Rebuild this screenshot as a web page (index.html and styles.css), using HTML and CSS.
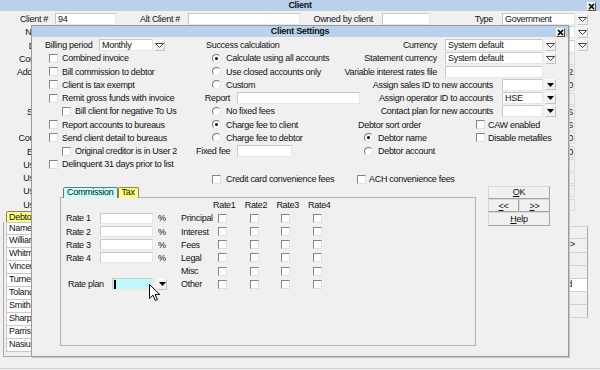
FILE: index.html
```html
<!DOCTYPE html>
<html lang="en">
<head>
    <meta charset="UTF-8">
    <meta name="viewport" content="width=device-width, initial-scale=1.0">
    <title>Client Settings</title>
    <link rel="stylesheet" href="styles.css">
</head>
<body>
<div class="desktop">

    <!-- background window: Client -->
    <div class="window client">
        <div class="caption">Client
            <span class="close"><svg width="7" height="7" viewBox="0 0 7 7"><path d="M1 1l5 5M6 1L1 6" stroke="#000" stroke-width="1.6"/></svg></span>
        </div>
        <div class="client-body">
            <div class="row top-row">
                <span class="lbl l-client">Client #</span><input class="field f-client" value="94">
                <span class="lbl l-alt">Alt Client #</span><input class="field f-alt">
                <span class="lbl l-owned">Owned by client</span><input class="field f-owned">
                <span class="lbl l-type">Type</span>
                <div class="combo c-type">
                    <span class="field val">Government</span>
                    <span class="drop"><svg width="9" height="5" viewBox="0 0 9 5"><path d="M.5.5h8l-4 4z" fill="#fff" stroke="#444"/></svg></span>
                </div>
            </div>
            <div class="row frow"><span class="flabel">Name</span><span class="field wide"></span><span class="drop"><svg width="9" height="5" viewBox="0 0 9 5"><path d="M.5.5h8l-4 4z" fill="#fff" stroke="#444"/></svg></span></div>
            <div class="row frow"><span class="flabel">Desk</span><span class="field wide"></span><span class="drop"><svg width="9" height="5" viewBox="0 0 9 5"><path d="M.5.5h8l-4 4z" fill="#fff" stroke="#444"/></svg></span></div>
            <div class="row frow"><span class="flabel">Contact</span><span class="field wide flat"></span></div>
            <div class="row frow"><span class="flabel">Address</span><span class="field wide flat">2</span></div>
            <div class="row frow"><span class="flabel"></span><span class="field wide flat">0</span></div>
            <div class="row frow"><span class="flabel"></span><span class="field wide flat"></span></div>
            <div class="row frow"><span class="flabel">Sales</span><span class="field wide flat">S</span></div>
            <div class="row frow"><span class="flabel"></span><span class="field wide flat">S</span></div>
            <div class="row frow"><span class="flabel">Country</span><span class="field wide flat">0</span></div>
            <div class="row frow"><span class="flabel">Email</span><span class="field wide flat">0</span></div>
            <div class="row frow"><span class="flabel">User 1</span><span class="field wide flat"></span></div>
            <div class="row frow"><span class="flabel">User 2</span><span class="field wide flat"></span></div>
            <div class="row frow"><span class="flabel">User 3</span><span class="field wide flat"></span></div>
            <div class="row frow"><span class="flabel">User 4</span><span class="field wide flat"></span></div>

            <div class="lists">
                <div class="list-wrap">
                    <span class="debt-tab">Debtors</span>
                    <div class="list-frame">
                        <div class="list-row">Name</div>
                        <div class="list-row">Williams, John</div>
                        <div class="list-row">Whitmore, Anne</div>
                        <div class="list-row">Vincent, Paul</div>
                        <div class="list-row">Turner, Mark</div>
                        <div class="list-row">Toland, Sue</div>
                        <div class="list-row">Smith, Robert</div>
                        <div class="list-row">Sharpe, Lisa</div>
                        <div class="list-row">Parris, Tom</div>
                        <div class="list-row">Nasiuk, Greg</div>
                    </div>
                </div>
                <div class="side-btns">
                    <div class="side-btn"></div>
                    <div class="side-btn">&gt;&gt;</div>
                    <div class="side-btn"></div>
                    <div class="side-btn"></div>
                    <div class="side-btn lit">Add</div>
                    <div class="side-btn"></div>
                    <div class="side-btn"></div>
                </div>
            </div>
        </div>
    </div>

    <!-- dialog: Client Settings -->
    <div class="window settings">
        <div class="caption">Client Settings
            <span class="close"><svg width="7" height="7" viewBox="0 0 7 7"><path d="M1 1l5 5M6 1L1 6" stroke="#000" stroke-width="1.6"/></svg></span>
        </div>
        <div class="settings-body">
            <div class="cols">
                <div class="col">
                    <div class="r">
                        <span class="lbl l-billing">Billing period</span>
                        <div class="combo c-month">
                            <span class="field val">Monthly</span>
                            <span class="drop"><svg width="9" height="5" viewBox="0 0 9 5"><path d="M.5.5h8l-4 4z" fill="#fff" stroke="#444"/></svg></span>
                        </div>
                    </div>
                    <div class="r chk"><span class="box"></span>Combined invoice</div>
                    <div class="r chk"><span class="box"></span>Bill commission to debtor</div>
                    <div class="r chk"><span class="box"></span>Client is tax exempt</div>
                    <div class="r chk"><span class="box"></span>Remit gross funds with invoice</div>
                    <div class="r chk sub"><span class="box"></span>Bill client for negative To Us</div>
                    <div class="r chk"><span class="box"></span>Report accounts to bureaus</div>
                    <div class="r chk"><span class="box"></span>Send client detail to bureaus</div>
                    <div class="r chk sub"><span class="box"></span>Original creditor is in User 2</div>
                    <div class="r chk"><span class="box"></span>Delinquent 31 days prior to list</div>
                </div>

                <div class="col">
                    <div class="r heading">Success calculation</div>
                    <div class="r rad"><span class="dot on"></span>Calculate using all accounts</div>
                    <div class="r rad"><span class="dot"></span>Use closed accounts only</div>
                    <div class="r rad"><span class="dot"></span>Custom</div>
                    <div class="r"><span class="lbl l-short">Report</span><input class="field f-report"></div>
                    <div class="r rad"><span class="dot"></span>No fixed fees</div>
                    <div class="r rad"><span class="dot on"></span>Charge fee to client</div>
                    <div class="r rad"><span class="dot"></span>Charge fee to debtor</div>
                    <div class="r"><span class="lbl l-short">Fixed fee</span><input class="field f-fee"></div>
                    <div class="r"></div>
                    <div class="r chk extra"><span class="box"></span>Credit card convenience fees</div>
                </div>

                <div class="col">
                    <div class="r right">
                        <span class="lbl">Currency</span>
                        <div class="combo c-wide">
                            <span class="field val">System default</span>
                            <span class="drop"><svg width="9" height="5" viewBox="0 0 9 5"><path d="M.5.5h8l-4 4z" fill="#fff" stroke="#444"/></svg></span>
                        </div>
                    </div>
                    <div class="r right">
                        <span class="lbl">Statement currency</span>
                        <div class="combo c-wide">
                            <span class="field val">System default</span>
                            <span class="drop"><svg width="9" height="5" viewBox="0 0 9 5"><path d="M.5.5h8l-4 4z" fill="#fff" stroke="#444"/></svg></span>
                        </div>
                    </div>
                    <div class="r right">
                        <span class="lbl">Variable interest rates file</span>
                        <input class="field f-rates">
                    </div>
                    <div class="r right">
                        <span class="lbl">Assign sales ID to new accounts</span>
                        <div class="combo c-small">
                            <span class="field val"></span>
                            <span class="drop"><svg width="7" height="4" viewBox="0 0 7 4"><path d="M0 0h7L3.5 4z"/></svg></span>
                        </div>
                    </div>
                    <div class="r right">
                        <span class="lbl">Assign operator ID to accounts</span>
                        <div class="combo c-small">
                            <span class="field val">HSE</span>
                            <span class="drop"><svg width="7" height="4" viewBox="0 0 7 4"><path d="M0 0h7L3.5 4z"/></svg></span>
                        </div>
                    </div>
                    <div class="r right">
                        <span class="lbl">Contact plan for new accounts</span>
                        <div class="combo c-small">
                            <span class="field val"></span>
                            <span class="drop"><svg width="7" height="4" viewBox="0 0 7 4"><path d="M0 0h7L3.5 4z"/></svg></span>
                        </div>
                    </div>
                    <div class="r split">
                        <span class="sort-title">Debtor sort order</span>
                        <span class="chk flush"><span class="box"></span>CAW enabled</span>
                    </div>
                    <div class="r split">
                        <span class="rad sort"><span class="dot on"></span>Debtor name</span>
                        <span class="chk flush"><span class="box"></span>Disable metafiles</span>
                    </div>
                    <div class="r split">
                        <span class="rad sort"><span class="dot"></span>Debtor account</span>
                    </div>
                    <div class="r"></div>
                    <div class="r chk flush extra"><span class="box"></span>ACH convenience fees</div>
                </div>
            </div>

            <div class="lower">
                <div class="tabbox">
                    <div class="tabs">
                        <span class="tab cyan">Commission</span>
                        <span class="tab yellow">Tax</span>
                    </div>
                    <div class="panel">
                        <div class="rates">
                            <span class="hdr c5">Rate1</span>
                            <span class="hdr c6">Rate2</span>
                            <span class="hdr c7">Rate3</span>
                            <span class="hdr c8">Rate4</span>

                            <span class="c1">Rate 1</span><input class="field rate-in"><span class="pct">%</span>
                            <span class="c4">Principal</span><span class="box"></span><span class="box"></span><span class="box"></span><span class="box"></span>

                            <span class="c1">Rate 2</span><input class="field rate-in"><span class="pct">%</span>
                            <span class="c4">Interest</span><span class="box"></span><span class="box"></span><span class="box"></span><span class="box"></span>

                            <span class="c1">Rate 3</span><input class="field rate-in"><span class="pct">%</span>
                            <span class="c4">Fees</span><span class="box"></span><span class="box"></span><span class="box"></span><span class="box"></span>

                            <span class="c1">Rate 4</span><input class="field rate-in"><span class="pct">%</span>
                            <span class="c4">Legal</span><span class="box"></span><span class="box"></span><span class="box"></span><span class="box"></span>

                            <span class="c4">Misc</span><span class="box"></span><span class="box"></span><span class="box"></span><span class="box"></span>

                            <div class="plan">
                                <span class="plan-lbl">Rate plan</span>
                                <div class="combo c-plan">
                                    <span class="field val"><span class="caret"></span></span>
                                    <span class="drop"><svg width="7" height="4" viewBox="0 0 7 4"><path d="M0 0h7L3.5 4z"/></svg></span>
                                </div>
                            </div>
                            <span class="c4">Other</span><span class="box"></span><span class="box"></span><span class="box"></span><span class="box"></span>
                        </div>
                    </div>
                </div>
                <div class="btns">
                    <button class="btn"><u>O</u>K</button>
                    <div class="btn-pair">
                        <button class="btn"><u>&lt;</u>&lt;</button>
                        <button class="btn"><u>&gt;</u>&gt;</button>
                    </div>
                    <button class="btn"><u>H</u>elp</button>
                </div>
            </div>
        </div>
    </div>

    <svg class="pointer" width="11" height="17" viewBox="0 0 11 17"><path d="M.5.5v14l3.5-3.3 2.3 5.3 2.1-.9-2.3-5.2h4.6z" fill="#fff" stroke="#000"/></svg>
</div>
</body>
</html>
```

FILE: styles.css
```css
* {
    box-sizing: border-box;
}
body {
    margin: 0;
    background: #f0f0f0;
    font: 9px "Liberation Sans", Arial, sans-serif;
    letter-spacing: -0.3px;
    color: #111;
}
.desktop {
    position: relative;
    width: 600px;
    height: 370px;
    overflow: hidden;
}
.window {
    background: #f0f0f0;
}
.caption {
    position: relative;
    height: 11px;
    line-height: 11px;
    background: #b9d1ea;
    font-weight: bold;
    text-align: center;
}
.close {
    position: absolute;
    top: 2px;
    right: 4px;
    width: 9px;
    height: 9px;
    display: flex;
    align-items: center;
    justify-content: center;
    background: #e6e6e6;
    border: 1px solid;
    border-color: #fff #505050 #505050 #fff;
}

/* shared controls */
.row, .r {
    height: 13.25px;
    display: flex;
    align-items: center;
    white-space: nowrap;
}
.lbl {
    text-align: right;
    flex: none;
}
.field {
    height: 12px;
    padding: 0 2px;
    font: inherit;
    letter-spacing: inherit;
    line-height: 10px;
    color: #111;
    background: #fff;
    border: 1px solid;
    border-color: #c8c8c8 #e6e6e6 #e6e6e6 #c8c8c8;
    outline: none;
    overflow: hidden;
}
.combo {
    display: flex;
    align-items: center;
    flex: none;
}
.drop {
    width: 11px;
    height: 11px;
    margin-left: 2px;
    display: flex;
    align-items: center;
    justify-content: center;
    background: #f0f0f0;
    border: 1px solid;
    border-color: #fff #c4c4c4 #c4c4c4 #fff;
}
.box {
    width: 9px;
    height: 9px;
    flex: none;
    background: #fff;
    border: 1px solid;
    border-color: #858585 #e0e0e0 #e0e0e0 #858585;
}
.dot {
    position: relative;
    width: 9px;
    height: 9px;
    flex: none;
    border-radius: 50%;
    background: #fff;
    border: 1px solid;
    border-color: #777 #e4e4e4 #e4e4e4 #777;
}
.dot.on::after {
    content: "";
    position: absolute;
    left: 2px;
    top: 2px;
    width: 3px;
    height: 3px;
    border-radius: 50%;
    background: #000;
}
.chk {
    display: flex;
    align-items: center;
    gap: 4px;
    padding-left: 4px;
}
.chk.sub {
    padding-left: 17px;
}
.chk.flush {
    padding-left: 0;
    gap: 3px;
}
.rad {
    display: flex;
    align-items: center;
    gap: 5px;
    padding-left: 16px;
}

/* Client window */
.client {
    height: 369px;
    border-bottom: 1px solid #d2d2d2;
}
.client-body {
    padding-top: 1.4px;
}
.l-client { width: 48px; }
.f-client { width: 61px; margin-left: 7px; }
.l-alt { width: 64px; }
.f-alt { width: 112px; margin-left: 8px; }
.l-owned { width: 73px; }
.f-owned { width: 48px; margin-left: 9px; }
.l-type { width: 63px; }
.c-type { margin-left: 9px; }
.c-type .val { width: 73px; }

.flabel {
    width: 48px;
    text-align: right;
    flex: none;
}
.field.wide {
    width: 520px;
    margin-left: 7px;
    text-align: right;
    padding-right: 1px;
}
.field.flat {
    background: #f0f0f0;
    border-color: #dcdcdc;
}
.lists {
    display: flex;
}
.list-wrap {
    margin-left: 3px;
    width: 510px;
}
.debt-tab {
    display: inline-block;
    height: 11px;
    margin-left: 3px;
    padding: 0 2px;
    line-height: 10px;
    background: #ffff80;
    border: 1px solid #808080;
    border-bottom: none;
    border-radius: 2px 2px 0 0;
}
.list-frame {
    height: 135px;
    padding-left: 2px;
    border-left: 1px solid #a8a8a8;
    border-bottom: 1px solid #a8a8a8;
}
.list-row {
    width: 80px;
    height: 13px;
    padding-left: 2px;
    line-height: 11px;
    background: #fff;
    border: 1px solid #c8c8c8;
    border-top: none;
}
.list-row:first-child {
    border-top: 1px solid #c8c8c8;
}
.side-btns {
    width: 68px;
    margin: 15px 0 0 7px;
}
.side-btn {
    height: 13.2px;
    padding-right: 12px;
    line-height: 11px;
    text-align: right;
    border: 1px solid #d0d0d0;
    border-right-color: #a8a8a8;
    border-top: none;
}
.side-btn:first-child {
    border-top: 1px solid #d0d0d0;
}
.side-btn.lit {
    background: #fff;
    padding-right: 15px;
}

/* Client Settings dialog */
.settings {
    position: absolute;
    left: 31px;
    top: 25px;
    width: 538px;
    height: 332px;
    border: 1px solid #9a9a9a;
    box-shadow: 1px 1px 0 #c4c4c4;
}
.settings .close {
    right: 3px;
}
.settings-body {
    padding: 1.4px 12px 0 13px;
}
.cols {
    display: grid;
    grid-template-columns: 151px 161px 199px;
}
.l-billing { width: 54px; text-align: left; }
.c-month .val { width: 54px; }
.c-month .drop { margin-left: 1px; }
.heading { padding-left: 10px; }
.l-short { width: 34px; }
.f-report { width: 124px; margin-left: 7px; }
.f-fee { width: 55px; margin-left: 7px; }
.extra { margin-top: 1.5px; }
.col .extra.chk:not(.flush) {
    padding-left: 16px;
    gap: 5px;
}
.r.right {
    justify-content: flex-end;
}
.c-wide { margin-left: 8px; }
.c-wide .val { width: 98px; }
.f-rates { width: 98px; margin: 0 13px 0 8px; }
.c-small { margin-left: 9px; }
.c-small .val { width: 41px; }
.r.split {
    display: grid;
    grid-template-columns: 119px 1fr;
}
.sort-title { padding-left: 1px; }
.rad.sort { padding-left: 7px; }

.lower {
    display: flex;
}
.tabbox {
    width: 416px;
    margin: 1px 0 0 15px;
}
.tabs {
    display: flex;
    height: 10px;
    padding-left: 3px;
}
.tab {
    height: 11px;
    padding: 0 3px;
    line-height: 9px;
    border: 1px solid #6a7a7a;
    border-bottom: none;
    border-radius: 2px 2px 0 0;
    position: relative;
}
.tab.cyan { background: #c8ffff; }
.tab.yellow { background: #ffff80; border-color: #8a8a50; }
.panel {
    height: 149px;
    padding: 1px 0 0 5px;
    border: 1px solid #b4b4b4;
}
.rates {
    display: grid;
    grid-template-columns: 34px 53px 28px 37px repeat(4, 31.7px);
    grid-auto-rows: 13.2px;
    align-items: center;
    white-space: nowrap;
}
.hdr { margin-left: -5px; }
.c1 { grid-column: 1; }
.c4 { grid-column: 4; }
.c5 { grid-column: 5; }
.c6 { grid-column: 6; }
.c7 { grid-column: 7; }
.c8 { grid-column: 8; }
.rate-in { height: 11px; }
.pct { padding-left: 5px; }
.plan {
    grid-column: 1 / span 3;
    display: flex;
    align-items: center;
    padding-left: 2px;
}
.plan-lbl { width: 44px; }
.c-plan .val {
    width: 41px;
    background: #c4f8ff;
    display: flex;
    align-items: center;
    padding-left: 1px;
}
.c-plan .drop { margin-left: 4px; width: 10px; }
.caret {
    width: 2px;
    height: 9px;
    background: #000;
}
.btns {
    width: 62px;
    margin-left: 12px;
    display: flex;
    flex-direction: column;
}
.btn-pair {
    display: flex;
}
.btn {
    height: 13.3px;
    width: 100%;
    padding: 0;
    font: inherit;
    letter-spacing: inherit;
    line-height: 10px;
    color: #111;
    background: #f0f0f0;
    border: 1px solid;
    border-color: #d8d8d8 #a4a4a4 #a4a4a4 #d8d8d8;
}
.btn-pair .btn {
    width: 50%;
}
.pointer {
    position: absolute;
    left: 149px;
    top: 284px;
}
```
